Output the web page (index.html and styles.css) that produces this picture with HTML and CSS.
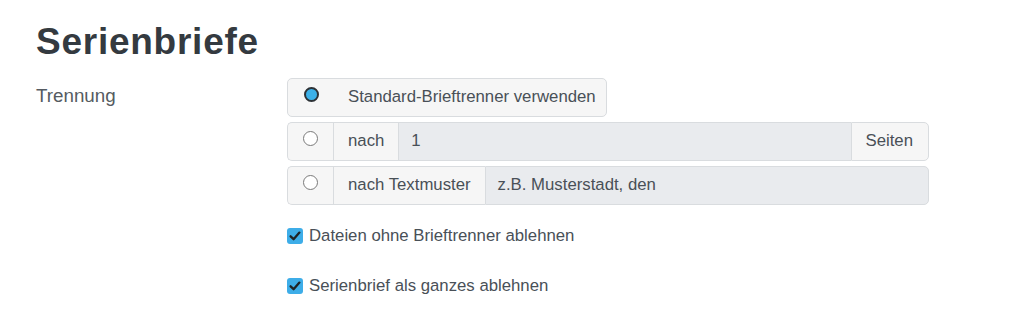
FILE: index.html
```html
<!DOCTYPE html>
<html lang="de">
<head>
<meta charset="utf-8">
<title>Serienbriefe</title>
<link rel="stylesheet" href="styles.css">
</head>
<body>
<div class="page">
  <h1 class="title">Serienbriefe</h1>
  <div class="form-row">
    <div class="label">Trennung</div>
    <div class="controls">
      <div class="option-box">
        <span class="radio-cell"><span class="radio checked"></span></span>
        <span class="option-text">Standard-Brieftrenner verwenden</span>
      </div>
      <div class="input-group">
        <span class="addon radio-cell"><span class="radio"></span></span>
        <span class="addon">nach</span>
        <span class="field">1</span>
        <span class="addon addon-end">Seiten</span>
      </div>
      <div class="input-group">
        <span class="addon radio-cell"><span class="radio"></span></span>
        <span class="addon">nach Textmuster</span>
        <span class="field field-end">z.B. Musterstadt, den</span>
      </div>
      <div class="checks">
        <label class="check">
          <span class="checkbox"><svg viewBox="0 0 16 16" width="16" height="16"><path d="M3.6 8.3 L6.6 11.2 L12.4 4.6" fill="none" stroke="#1f2326" stroke-width="2.3" stroke-linecap="round" stroke-linejoin="round"/></svg></span>
          <span>Dateien ohne Brieftrenner ablehnen</span>
        </label>
        <label class="check">
          <span class="checkbox"><svg viewBox="0 0 16 16" width="16" height="16"><path d="M3.6 8.3 L6.6 11.2 L12.4 4.6" fill="none" stroke="#1f2326" stroke-width="2.3" stroke-linecap="round" stroke-linejoin="round"/></svg></span>
          <span>Serienbrief als ganzes ablehnen</span>
        </label>
      </div>
    </div>
  </div>
</div>
</body>
</html>
```
FILE: styles.css
```css
* { box-sizing: border-box; }
html, body {
  margin: 0;
  padding: 0;
  background: #ffffff;
  font-family: "Liberation Sans", Arial, sans-serif;
  color: #495057;
}
.page {
  padding: 20px 36px 0 36px;
}
.title {
  margin: 0 0 15px 0;
  font-size: 37px;
  line-height: 43px;
  letter-spacing: 0.75px;
  font-weight: bold;
  color: #343a40;
}
.form-row {
  display: flex;
}
.label {
  width: 251px;
  flex: none;
  padding-top: 5px;
  font-size: 18.8px;
  line-height: 26px;
  color: #555b61;
}
.controls {
  width: 642px;
  display: flex;
  flex-direction: column;
  gap: 5px;
}
.option-box {
  align-self: flex-start;
  width: 320px;
  height: 39px;
  display: flex;
  align-items: center;
  background: #f6f6f6;
  border: 1px solid #d9dcdf;
  border-radius: 5px;
  font-size: 16.75px;
  color: #495057;
}
.radio-cell {
  width: 46px;
  flex: none;
  display: flex;
  justify-content: center;
  align-self: stretch;
  padding-top: 8px;
}
.option-text {
  padding-left: 14px;
  margin-top: -2px;
}
.radio {
  display: block;
  width: 15px;
  height: 15px;
  border-radius: 50%;
  background: #ffffff;
  border: 1px solid #7a7a7a;
}
.radio.checked {
  width: 15px;
  height: 15px;
  border: 2.5px solid #2d3236;
  background: #3cb1e9;
}
.input-group {
  display: flex;
  height: 39px;
  font-size: 16.75px;
}
.addon {
  display: flex;
  align-items: center;
  padding: 0 14px 2px 14px;
  background: #f6f6f6;
  border: 1px solid #d9dcdf;
  border-right: none;
  color: #495057;
  white-space: nowrap;
}
.addon:first-child {
  border-radius: 5px 0 0 5px;
}
.addon.radio-cell {
  padding: 8px 0 0 0;
  align-items: flex-start;
}
.addon-end {
  border-right: 1px solid #d9dcdf;
  border-radius: 0 5px 5px 0;
  padding: 0 15px 2px 14px;
}
.field {
  flex: 1;
  display: flex;
  align-items: center;
  padding: 0 12px 2px 12px;
  background: #e9ebee;
  border: 1px solid #d9dcdf;
  border-right: none;
  color: #495057;
}
.field-end {
  border-right: 1px solid #d9dcdf;
  border-radius: 0 5px 5px 0;
}
.checks {
  display: flex;
  flex-direction: column;
  gap: 26px;
  margin-top: 14px;
}
.check {
  display: flex;
  align-items: center;
  gap: 6px;
  font-size: 16.75px;
  line-height: 24px;
  color: #495057;
}
.checkbox {
  width: 16px;
  height: 16px;
  flex: none;
  border-radius: 3px;
  background: #3dade8;
  display: block;
}
.checkbox svg {
  display: block;
}
```
